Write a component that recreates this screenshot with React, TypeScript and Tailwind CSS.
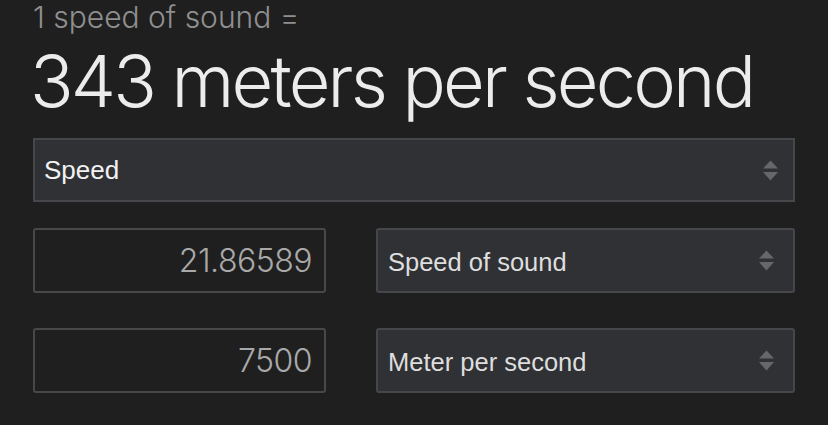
import React from "react";

function Arrows({ className = "" }: { className?: string }) {
  return (
    <svg width="15" height="21" viewBox="0 0 15 21" className={className}>
      <polygon points="0,8.5 7.5,0.5 15,8.5" fill="#666769" />
      <polygon points="0,12 7.5,20.5 15,12" fill="#666769" />
    </svg>
  );
}

export default function App() {
  const light = { fontFamily: "Inter, 'Liberation Sans', sans-serif" };
  const reg = { fontFamily: "'Liberation Sans', Arial, sans-serif" };
  return (
    <div className="w-[828px] h-[425px] overflow-hidden bg-[#1f1f1f] px-[33px]">
      <div
        className="text-[30px] font-light leading-[34px] text-[#8f8f8f] tracking-[0px]"
        style={light}
      >
        1 speed of sound =
      </div>
      <div
        className="text-[72px] font-light leading-[80px] text-[#ececec] -ml-[3px] tracking-[-2.8px] mt-[7px]"
        style={light}
      >
        343 meters per second
      </div>
      <div className="mt-[17px] h-[64px] border-2 border-[#45474b] bg-[#303135] flex items-center justify-between pl-[9px] pr-[15px]">
        <span className="text-[26px] text-[#f2f2f2] mt-[1px]" style={reg}>
          Speed
        </span>
        <Arrows />
      </div>
      <div className="mt-[26px] grid grid-cols-[293px_419px] gap-x-[50px] gap-y-[35px]">
        <div className="h-[65px] border-2 border-[#47484a] rounded-[3px] flex items-center justify-end pr-[12px]">
          <span className="text-[32px] font-light text-[#a9a9a9] tracking-[-0.5px]" style={light}>
            21.86589
          </span>
        </div>
        <div className="h-[65px] border-2 border-[#45474b] rounded-[3px] bg-[#303135] flex items-center justify-between pl-[10px] pr-[19px]">
          <span className="text-[25.5px] text-[#dedede] mt-[3px]" style={reg}>
            Speed of sound
          </span>
          <Arrows />
        </div>
        <div className="h-[65px] border-2 border-[#47484a] rounded-[3px] flex items-center justify-end pr-[12px]">
          <span className="text-[32px] font-light text-[#a9a9a9] tracking-[-0.5px]" style={light}>
            7500
          </span>
        </div>
        <div className="h-[65px] border-2 border-[#45474b] rounded-[3px] bg-[#303135] flex items-center justify-between pl-[10px] pr-[19px]">
          <span className="text-[25.5px] text-[#dedede] mt-[3px]" style={reg}>
            Meter per second
          </span>
          <Arrows />
        </div>
      </div>
    </div>
  );
}
